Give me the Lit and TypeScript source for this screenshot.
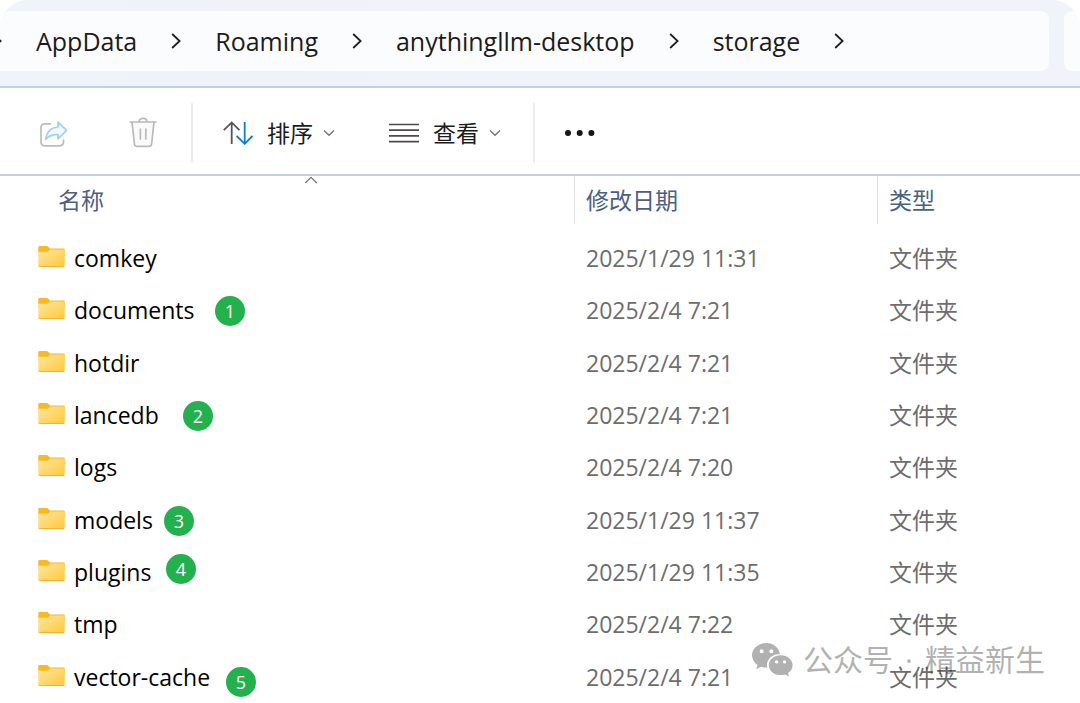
import { LitElement, html, css, svg } from "lit";
import { customElement, state } from "lit/decorators.js";
import { styleMap } from "lit/directives/style-map.js";

interface Entry {
  name: string;
  modified: string;
}

interface Marker {
  label: number;
  x: number;
  y: number;
}

const ENTRIES: Entry[] = [
  { name: "comkey", modified: "2025/1/29 11:31" },
  { name: "documents", modified: "2025/2/4 7:21" },
  { name: "hotdir", modified: "2025/2/4 7:21" },
  { name: "lancedb", modified: "2025/2/4 7:21" },
  { name: "logs", modified: "2025/2/4 7:20" },
  { name: "models", modified: "2025/1/29 11:37" },
  { name: "plugins", modified: "2025/1/29 11:35" },
  { name: "tmp", modified: "2025/2/4 7:22" },
  { name: "vector-cache", modified: "2025/2/4 7:21" },
];

// Centres of the numbered annotations, relative to the file list.
const MARKERS: Marker[] = [
  { label: 1, x: 230, y: 135 },
  { label: 2, x: 198, y: 240 },
  { label: 3, x: 179, y: 345 },
  { label: 4, x: 181, y: 393 },
  { label: 5, x: 241, y: 506 },
];

const PATH = ["AppData", "Roaming", "anythingllm-desktop", "storage"];

const crumbChevron = svg`<svg class="crumb-chevron" viewBox="0 0 10 16" aria-hidden="true">
  <path d="M1.2 1 L8.6 8 L1.2 15" fill="none" stroke="#1f1f1f" stroke-width="1.8"/></svg>`;

const downChevron = html`<svg class="down" viewBox="0 0 12 8" aria-hidden="true">
  <path d="M1 1.5 L6 6.3 L11 1.5" fill="none" stroke="#777" stroke-width="1.4"/></svg>`;

const folder = html`<svg class="folder" viewBox="0 0 27 21" aria-hidden="true">
  <defs>
    <linearGradient id="f" x1="0" y1="0" x2="1" y2="1">
      <stop offset="0" stop-color="#ffe7a2"/><stop offset="1" stop-color="#ffc937"/>
    </linearGradient>
  </defs>
  <path d="M0.3 1.2 Q0.3 0 1.5 0 H8.6 Q9.6 0 10.2 0.7 L12 2.4 H25.6 Q26.7 2.4 26.7 3.5 V10 H0.3 Z" fill="#fab91e"/>
  <path d="M0.3 5.8 H9.4 Q10.3 5.8 11 5 L12 3.4 H25.6 Q26.7 3.4 26.7 4.4 V19.6 Q26.7 20.7 25.6 20.7 H1.4 Q0.3 20.7 0.3 19.6 Z" fill="url(#f)"/>
  <path d="M0.6 20.2 Q0.9 20.6 1.5 20.6 H25.5 Q26.1 20.6 26.4 20.2" fill="none" stroke="#eba92c" stroke-width="0.9"/>
</svg>`;

@customElement("app-root")
export class AppRoot extends LitElement {
  @state() private entries = ENTRIES;

  static styles = css`
    :host {
      display: flex;
      flex-direction: column;
      position: relative;
      min-height: 100vh;
      overflow: hidden;
      background: #fff;
      color: #1b1b1b;
      font-family: "Open Sans", "Noto Sans CJK SC", sans-serif;
      font-size: 23px;
      line-height: 32px;
    }
    svg {
      display: block;
      flex: none;
    }
    button {
      display: flex;
      align-items: center;
      padding: 0;
      border: 0;
      background: none;
      color: inherit;
      font: inherit;
    }
    .address-row {
      display: flex;
      gap: 15px;
      padding: 11px 0 15px;
      border-radius: 28px 28px 0 0;
      background: linear-gradient(90deg, #eef4f9, #f0f3f9 40%);
      overflow: hidden;
    }
    .address {
      flex: 1;
      display: flex;
      align-items: center;
      height: 60px;
      border-radius: 0 8px 8px 0;
      background: #fbfcfe;
    }
    .address ol {
      display: flex;
      align-items: center;
      gap: 34px;
      margin: 0 0 0 -8px;
      padding: 0;
      list-style: none;
    }
    .address li {
      display: flex;
      align-items: center;
      gap: 34px;
    }
    .address a {
      color: inherit;
      font-size: 25px;
      text-decoration: none;
    }
    .crumb-chevron {
      width: 10px;
      height: 16px;
    }
    .search {
      width: 16px;
      border-radius: 8px 0 0 8px;
      background: #fbfcfe;
    }
    .toolbar {
      display: flex;
      align-items: center;
      box-sizing: border-box;
      height: 90px;
      padding-top: 3px;
      border: solid #c3cfe0;
      border-width: 2px 0;
    }
    .file-actions {
      display: flex;
      gap: 61px;
      padding: 0 34px 0 39px;
    }
    .view-actions {
      display: flex;
      gap: 54px;
      padding: 0 32px 0 30px;
    }
    .view-actions button {
      gap: 14px;
    }
    .caption {
      display: flex;
      align-items: center;
      gap: 10px;
    }
    .rule {
      width: 2px;
      height: 60px;
      background: #ededed;
    }
    .more {
      margin-left: 29px;
    }
    .down {
      width: 12px;
      height: 8px;
    }
    .files {
      flex: 1;
      display: flex;
      flex-direction: column;
      position: relative;
    }
    table,
    tbody {
      flex: 1;
      display: flex;
      flex-direction: column;
    }
    thead {
      display: block;
      margin-bottom: 8px;
    }
    tr {
      display: grid;
      grid-template-columns: 574px 303px 1fr;
      align-items: center;
    }
    tbody tr {
      flex: 1;
      min-height: 48px;
    }
    th,
    td {
      display: flex;
      align-items: center;
      padding: 0 0 0 12px;
      color: #6d6d6d;
      font-weight: 400;
    }
    th {
      position: relative;
      height: 48px;
      box-sizing: border-box;
      border-left: 1px solid #e2e2e2;
      padding-left: 11px;
      color: #4c607f;
    }
    th:first-child {
      margin-left: 46px;
      border-left-color: transparent;
    }
    .sorted {
      position: absolute;
      top: 0;
      left: 50%;
      width: 14px;
      height: 8px;
      margin-left: -7px;
    }
    td.name {
      gap: 9px;
      padding-left: 38px;
      color: #000;
    }
    .folder {
      width: 27px;
      height: 21px;
      margin-bottom: 3px;
    }
    .marker {
      position: absolute;
      width: 30px;
      height: 30px;
      border-radius: 50%;
      background: #23b14d;
      color: #fff;
      font-size: 18px;
      line-height: 30px;
      text-align: center;
      transform: translate(-50%, -50%);
    }
    .watermark {
      position: absolute;
      right: 35px;
      bottom: 21px;
      display: flex;
      align-items: center;
      gap: 10px;
      color: #000;
      font-size: 30px;
      line-height: 44px;
      opacity: 0.3;
    }
    .account {
      display: flex;
      gap: 12px;
    }
  `;

  private toolbar() {
    return html`<div class="toolbar" role="toolbar">
      <div class="file-actions">
        <button aria-label="共享">
          <svg width="29" height="30" viewBox="0 0 29 30" fill="none">
            <path d="M11.5 5.8 H6 Q2 5.8 2 9.8 V23.8 Q2 27.8 6 27.8 H20.5 Q24.5 27.8 24.5 23.8 V22" stroke="#bdbdbd" stroke-width="1.7" stroke-linecap="round"/>
            <path d="M19 4.2 L27.6 12.4 L19 20.8 V16.6 Q11 16 6.8 21.4 Q8 10 19 9 Z" fill="#eff8fe" stroke="#a3cff2" stroke-width="1.7" stroke-linejoin="round"/>
          </svg>
        </button>
        <button aria-label="删除">
          <svg width="28" height="31" viewBox="0 0 28 31" fill="none" stroke="#bababa" stroke-width="1.7" stroke-linecap="round" stroke-linejoin="round">
            <path d="M3 5 L5.4 27 Q5.7 29.4 8 29.4 H20 Q22.3 29.4 22.6 27 L25 5" fill="#fafafa"/>
            <path d="M1.2 5 H26.8 M10 4.6 Q10.4 1.4 14 1.4 Q17.6 1.4 18 4.6 M11.4 12 V22 M16.8 12 V22"/>
          </svg>
        </button>
      </div>
      <div class="rule"></div>
      <div class="view-actions">
        <button>
          <svg width="30" height="24" viewBox="0 0 30 24" fill="none" stroke-width="1.8">
            <path d="M0.8 9.2 L8.7 1.4 L16.4 9.2 M8.7 1.6 V23" stroke="#555"/>
            <path d="M13.6 15 L21.7 22.8 L29.4 15 M21.7 1 V22.6" stroke="#0f7ad8"/>
          </svg>
          <span class="caption">排序 ${downChevron}</span>
        </button>
        <button>
          <svg width="30" height="20" viewBox="0 0 30 20" fill="none" stroke="#4e4a4a" stroke-width="1.7">
            <path d="M0 1.5 H30 M0 7.2 H30 M0 12.9 H30 M0 18.6 H30"/>
          </svg>
          <span class="caption">查看 ${downChevron}</span>
        </button>
      </div>
      <div class="rule"></div>
      <button class="more" aria-label="更多">
        <svg width="32" height="8" viewBox="0 0 32 8" fill="#161616">
          <circle cx="4" cy="4" r="3"/><circle cx="15.7" cy="4" r="3"/><circle cx="27.4" cy="4" r="3"/>
        </svg>
      </button>
    </div>`;
  }

  render() {
    return html`
      <header class="address-row">
        <nav class="address">
          <ol>
            <li>${crumbChevron}</li>
            ${PATH.map((part) => html`<li><a href="#">${part}</a>${crumbChevron}</li>`)}
          </ol>
        </nav>
        <div class="search"></div>
      </header>
      ${this.toolbar()}
      <main class="files">
        <table>
          <thead>
            <tr>
              <th>
                名称
                <svg class="sorted" viewBox="0 0 14 8" aria-hidden="true">
                  <path d="M1.2 7 L7 1.4 L12.8 7" fill="none" stroke="#777" stroke-width="1.3"/>
                </svg>
              </th>
              <th>修改日期</th>
              <th>类型</th>
            </tr>
          </thead>
          <tbody>
            ${this.entries.map(
              (e) => html`<tr>
                <td class="name">${folder}<span>${e.name}</span></td>
                <td>${e.modified}</td>
                <td>文件夹</td>
              </tr>`
            )}
          </tbody>
        </table>
        ${MARKERS.map(
          (m) => html`<span class="marker" style=${styleMap({ left: `${m.x}px`, top: `${m.y}px` })}>${m.label}</span>`
        )}
      </main>
      <div class="watermark">
        <svg width="41" height="34" viewBox="0 0 41 34" aria-hidden="true">
          <path fill-rule="evenodd" d="M14.5 0 C6.4 0 0 5.4 0 12.3 C0 16.2 2.1 19.6 5.5 21.9 L4.2 26.3 L9.2 23.7 C11 24.3 13 24.6 15.3 24.5 C13.6 17.4 19.4 11 27.9 11 C27 4.7 21.4 0 14.5 0 Z M9.7 6.3 A2 2 0 1 1 9.6 10.3 A2 2 0 1 1 9.7 6.3 Z M19.4 6.3 A2 2 0 1 1 19.3 10.3 A2 2 0 1 1 19.4 6.3 Z"/>
          <path fill-rule="evenodd" d="M28.6 12.3 C22 12.3 16.8 16.8 16.8 22.2 C16.8 27.7 22 32.1 28.6 32.1 C30.2 32.1 31.7 31.9 33 31.4 L37 33.6 L36 30 C38.9 28.2 40.6 25.4 40.6 22.2 C40.6 16.8 35.3 12.3 28.6 12.3 Z M24.7 17.2 A1.7 1.7 0 1 1 24.6 20.6 A1.7 1.7 0 1 1 24.7 17.2 Z M32.5 17.2 A1.7 1.7 0 1 1 32.4 20.6 A1.7 1.7 0 1 1 32.5 17.2 Z"/>
        </svg>
        <span class="account"><span>公众号</span><span>·</span><span>精益新生</span></span>
      </div>
    `;
  }
}
